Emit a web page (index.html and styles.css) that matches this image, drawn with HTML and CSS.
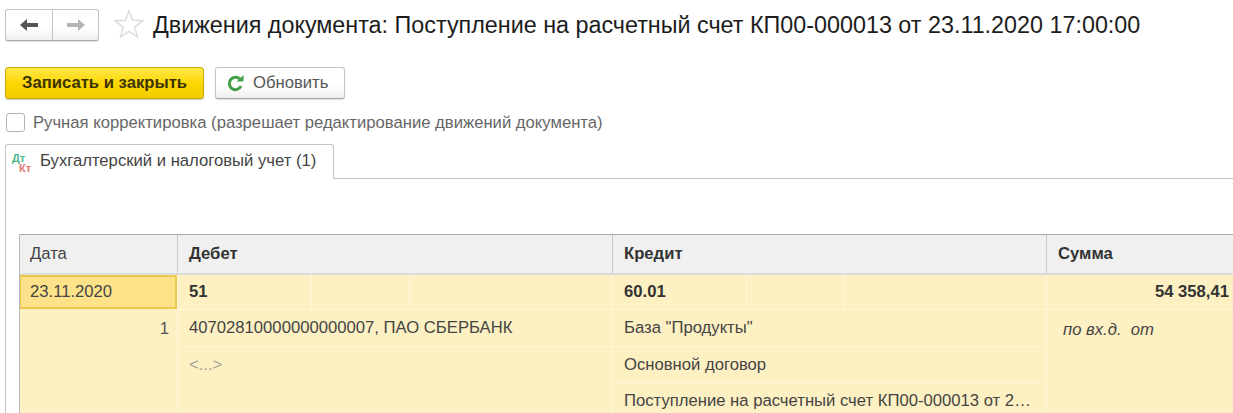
FILE: index.html
```html
<!DOCTYPE html>
<html lang="ru">
<head>
<meta charset="utf-8">
<title>Движения документа</title>
<link rel="stylesheet" href="styles.css">
</head>
<body>
<header class="head">
  <div class="nav">
    <button class="nav-btn"><svg width="18" height="14" viewBox="0 0 18 14"><path d="M0 7 7 1v4h11v4H7v4z" fill="#555"/></svg></button>
    <button class="nav-btn nav-next"><svg width="18" height="14" viewBox="0 0 18 14"><path d="M18 7 11 1v4H0v4h11v4z" fill="#b5b5b5"/></svg></button>
  </div>
  <svg class="star" width="30" height="30" viewBox="0 0 30 30"><path d="M15 2l3.600 9.300 10 .5-7.800 6.300 2.600 9.700L15 22.400l-8.400 5.400 2.600-9.700-7.800-6.300 10-.5z" fill="#fff" stroke="#dcdcdc" stroke-width="1.500"/></svg>
  <h1 class="title">Движения документа: Поступление на расчетный счет КП00-000013 от 23.11.2020 17:00:00</h1>
</header>
<div class="actions">
  <button class="btn btn-primary">Записать и закрыть</button>
  <button class="btn btn-plain"><svg width="17" height="17" viewBox="0 0 16 16"><path d="M13.200 10.500A5.800 5.800 0 1 1 12.200 4" fill="none" stroke="#43a047" stroke-width="2.800"/><path d="M9 6h6.500V0z" fill="#43a047"/></svg>Обновить</button>
</div>
<label class="check"><span class="box"></span><span class="check-text">Ручная корректировка (разрешает редактирование движений документа)</span></label>
<div class="tabs">
  <div class="tab"><span class="dtkt"><span class="dt">Дт</span><span class="kt">Кт</span></span>Бухгалтерский и налоговый учет (1)</div>
  <div class="tab-rest"></div>
</div>
<main class="panel">
  <div class="grid">
    <div class="th th-date">Дата</div>
    <div class="th strong">Дебет</div>
    <div class="th strong">Кредит</div>
    <div class="th strong th-last">Сумма</div>

    <div class="date-col">
      <div class="date-cell">23.11.2020</div>
      <div class="line-no">1</div>
    </div>

    <div class="acc-col">
      <div class="row r1 strong tri"><span>51</span><span></span><span></span></div>
      <div class="row r2">40702810000000000007, ПАО СБЕРБАНК</div>
      <div class="row r3 muted">&lt;...&gt;</div>
    </div>

    <div class="acc-col">
      <div class="row r1 strong tri"><span>60.01</span><span></span><span></span></div>
      <div class="row r2">База "Продукты"</div>
      <div class="row r3b">Основной договор</div>
      <div class="row r4">Поступление на расчетный счет КП00-000013 от 2…</div>
    </div>

    <div class="sum-col">
      <div class="row r1 strong right">54 358,41</div>
      <div class="note">по вх.д.&nbsp; от</div>
    </div>
  </div>
</main>
</body>
</html>
```
FILE: styles.css
```css
* { box-sizing: border-box; }
html, body { margin: 0; height: 413px; overflow: hidden; background: #fff; }
body { font-family: "Liberation Sans", Arial, sans-serif; color: #333; font-size: 16.670px; }

.head { display: flex; align-items: center; height: 50px; padding: 0 0 0 5px; }
.nav { display: flex; width: 94px; height: 32px; margin-top: -1px; border: 1px solid #c4c4c4; border-bottom-color: #aaa; border-radius: 3px; background: linear-gradient(#fff 55%, #efefef); box-shadow: 0 1px 1px #ddd; }
.nav-btn { flex: 0 0 46px; padding: 0; border: 0; background: none; display: flex; align-items: center; justify-content: center; }
.nav-next { flex: 1; border-left: 1px solid #c4c4c4; }
.star { margin-left: 15px; margin-top: -2px; }
.title { margin: 0 0 0 9px; font-size: 23.340px; font-weight: 400; color: #1c1c1c; white-space: nowrap; }

.actions { display: flex; gap: 11px; padding: 17px 0 0 5px; }
.btn { height: 32px; border-radius: 3px; font-family: inherit; font-size: 16.670px; display: flex; align-items: center; justify-content: center; padding: 0; }
.btn-primary { width: 199px; border: 1px solid #c9a800; background: linear-gradient(#ffe84a, #fbd500 55%, #f3cc00); color: #3b3200; font-weight: 700; box-shadow: 0 1px 1px #ccc; }
.btn-plain { width: 130px; gap: 9px; justify-content: flex-start; padding-left: 11px; border: 1px solid #c4c4c4; border-bottom-color: #aaa; background: linear-gradient(#fff 55%, #efefef); color: #555; box-shadow: 0 1px 1px #ddd; }

.check { display: flex; align-items: center; gap: 8px; margin: 13px 0 0 6px; height: 20px; color: #666; white-space: nowrap; }
.check-text { padding-top: 2px; }
.box { width: 19px; height: 19px; border: 1px solid #b4b4b4; border-radius: 3px; background: #fff; }

.tabs { display: flex; height: 35px; margin: 12px 0 0 5px; }
.tab { width: 329px; display: flex; align-items: center; padding-left: 6px; gap: 6px; border: 1px solid #c4c4c4; border-bottom: 0; border-radius: 3px 3px 0 0; color: #444; white-space: nowrap; padding-bottom: 2px; }
.tab-rest { flex: 1; border-bottom: 1px solid #c4c4c4; }
.dtkt { display: flex; flex-direction: column; width: 22px; font-size: 11px; font-weight: 700; line-height: 10px; margin-top: 4px; }
.dt { color: #4cb58a; }
.kt { color: #e0787a; margin-left: 7px; }

.panel { margin-left: 5px; border-left: 1px solid #c4c4c4; padding: 55px 0 0 13px; }
.grid { display: grid; grid-template-columns: 158px 435px 434px 1fr; grid-template-rows: 40px 145px; border-top: 1px solid #aaa; border-left: 1px solid #bbb; background: #fdf0c2; }
.th { background: #f0f0f0; display: flex; align-items: center; padding-left: 11px; border-right: 1px solid #c8c8c8; border-bottom: 2px solid #ddd; color: #444; }
.th-date { padding-left: 10px; }
.th-last { border-right: 0; }
.strong { font-weight: 700; color: #333; }

.date-col { border-right: 1px solid #fff6dc; display: flex; flex-direction: column; }
.date-cell { height: 34px; display: flex; align-items: center; padding-left: 9px; background: #fde28a; border: 2px solid #ecc94b; border-left-width: 1px; color: #444; }
.line-no { padding: 10px 8px 0 0; text-align: right; color: #555; }

.acc-col { border-right: 1px solid #fff6dc; display: flex; flex-direction: column; }
.row { flex: none; display: flex; align-items: center; padding-left: 11px; color: #444; white-space: nowrap; border-bottom: 1px solid #fff6dc; }
.r1 { height: 35px; color: #333; }
.r2 { height: 37px; }
.r3 { flex: 1; align-items: flex-start; padding-top: 8px; border-bottom: 0; color: #a5a095; }
.r3b { height: 36px; }
.r4 { height: 36px; border-bottom: 0; }
.tri { padding: 0; align-items: stretch; display: grid; grid-template-columns: 134px 98px 1fr; }
.tri span { display: flex; align-items: center; padding-left: 11px; border-right: 1px solid #fff6dc; }
.tri span:last-child { border-right: 0; }

.sum-col { display: flex; flex-direction: column; }
.right { padding: 0 4px 0 0; justify-content: flex-end; }
.note { padding: 10px 0 0 16px; font-style: italic; color: #444; }
```
